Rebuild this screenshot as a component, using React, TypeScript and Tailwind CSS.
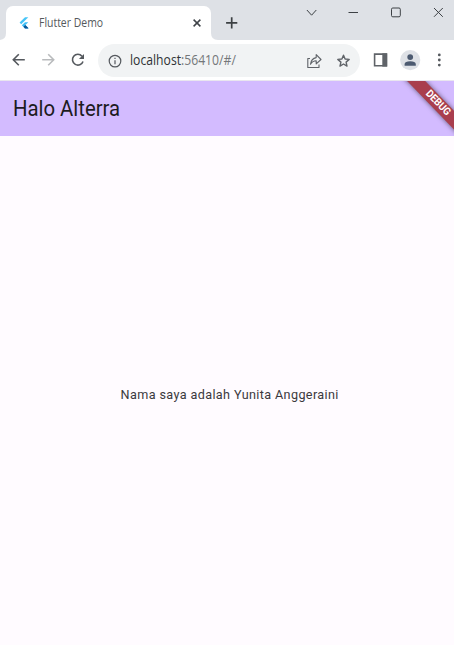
import React from "react";

function TabStrip() {
  return (
    <header className="flex h-[40px] shrink-0 bg-[#dee1e6] pl-[6px]">
      <div className="relative mt-[6px] flex h-[34px] w-[205px] items-center rounded-t-[7px] bg-white">
        <svg className="absolute -left-[7px] bottom-0" width="7" height="7" viewBox="0 0 7 7">
          <path d="M7 0V7H0Q7 7 7 0Z" fill="#fff" />
        </svg>
        <svg className="absolute -right-[7px] bottom-0" width="7" height="7" viewBox="0 0 7 7">
          <path d="M0 0V7H7Q0 7 0 0Z" fill="#fff" />
        </svg>
        <svg className="ml-[13px] shrink-0" width="10" height="12" viewBox="0 0 10 12">
          <path d="M6 .3H9.3L2.2 7.2.6 5.6Z" fill="#46c5f8" />
          <path d="M6 5.2H9.3L6.4 8 9.3 10.9V11.4H6L2.8 8.3Z" fill="#40bff5" />
          <path d="M4.5 9.8L6.3 8.1 9.3 10.9V11.4H6Z" fill="#075597" />
        </svg>
        <span className="ml-[10px] w-[152px] origin-left scale-x-[0.87] whitespace-nowrap font-['Open_Sans','Noto_Sans',sans-serif] text-[12px] leading-4 text-[#55595d]">
          Flutter Demo
        </span>
        <svg className="absolute left-[187px] top-[13px]" width="8" height="8" viewBox="0 0 8 8" fill="none" stroke="#3f4348" strokeWidth="1.5">
          <path d="M.6.6 7.4 7.4M7.4.6.6 7.4" />
        </svg>
      </div>
      <svg className="ml-[15px] mt-[17px]" width="12" height="12" viewBox="0 0 12 12" fill="none" stroke="#3c4043" strokeWidth="1.7">
        <path d="M5.7.3V11.5M.1 5.9H11.3" />
      </svg>
      <svg className="ml-auto mr-[5px] mt-[6px]" width="145" height="14" viewBox="0 0 145 14" fill="none" stroke="#3d4145" strokeWidth="1">
        <path d="M2.9 4 7.6 9.2 12.3 4" />
        <path d="M44.5 6.5H54" />
        <rect x="87.5" y="2" width="8.8" height="8.8" rx="1.3" />
        <path d="M130 2 138.8 10.8M138.8 2 130 10.8" />
      </svg>
    </header>
  );
}

function Toolbar() {
  return (
    <nav className="flex h-[41px] shrink-0 border-b border-[#e9e6ef] bg-white">
      <svg className="mt-[11px] shrink-0" width="98" height="18" viewBox="0 0 98 18" fill="none" strokeWidth="1.6">
        <path d="M24.8 8.7H13.5M18.8 3.2 13.3 8.7 18.8 14.2" stroke="#55595e" />
        <path d="M42.2 8.7H53.5M48.2 3.2 53.7 8.7 48.2 14.2" stroke="#b9bbbd" />
        <path d="M82 5.2A5.4 5.4 0 1 0 83 10.4" stroke="#55595e" />
        <path d="M84 3V8.1H78.9Z" fill="#55595e" />
      </svg>
      <div className="mt-[4px] flex h-[33px] w-[262px] shrink-0 items-center rounded-full bg-[#f1f3f4]">
        <svg className="ml-[10px] shrink-0" width="14" height="14" viewBox="0 0 14 14" fill="none" stroke="#55595e" strokeWidth="1.2">
          <circle cx="7" cy="7.1" r="5.8" />
          <path d="M7 6.3V10.2M7 3.8V5.1" />
        </svg>
        <span className="mb-[2px] ml-[7.5px] w-[177.5px] origin-left scale-x-[0.87] whitespace-nowrap font-['Open_Sans','Noto_Sans',sans-serif] text-[14px] leading-5 text-[#74777a]">
          <span className="text-[#303336]">localhost</span>:56410/#/
        </span>
        <svg className="shrink-0" width="48" height="18" viewBox="0 0 48 18" fill="none" stroke="#5f6368" strokeWidth="1.1" strokeLinejoin="round">
          <path d="M3 6.5H.8V15.5H12V12.5" />
          <path d="M3.5 12.2C4 8.3 6 6.1 9.2 5.6V2.6L14 7.5 9.2 11.8V8.8C6.8 8.8 4.9 10 3.5 12.2Z" />
          <path d="M36.5 3.2 38.1 7 42.2 7.4 39.1 10.1 40 14.1 36.5 12 33 14.1 33.9 10.1 30.8 7.4 34.9 7Z" strokeWidth="1.4" />
        </svg>
      </div>
      <svg className="ml-[13px] mt-[9px] shrink-0" width="75" height="22" viewBox="0 0 75 22">
        <path d="M1.6 5.1H13.4V16.8H1.6Z" fill="none" stroke="#5f6368" strokeWidth="1.6" />
        <path d="M9.3 4.3H14.2V17.6H9.3Z" fill="#5f6368" />
        <circle cx="37.2" cy="11.1" r="10.1" fill="#dee1e6" />
        <circle cx="37.2" cy="8.1" r="2.9" fill="#4c5a70" />
        <path d="M31.6 16.8V15Q32 12.3 37.2 12.3T42.8 15V16.8Z" fill="#4c5a70" />
        <circle cx="66.3" cy="5.9" r="1.4" fill="#55595e" />
        <circle cx="66.3" cy="11" r="1.4" fill="#55595e" />
        <circle cx="66.3" cy="16.1" r="1.4" fill="#55595e" />
      </svg>
    </nav>
  );
}

function DebugBanner() {
  return (
    <div className="absolute left-[393px] top-[16px] flex h-[12.5px] w-[90px] rotate-[46deg] items-center justify-center bg-[#a93e4e] shadow-[0_0_5px_rgba(0,0,0,0.55)]">
      <span className="font-[Roboto,sans-serif] text-[10.5px] font-bold leading-none text-white">
        <span className="inline-block scale-x-[0.92]">DEBUG</span>
      </span>
    </div>
  );
}

export default function App() {
  return (
    <div className="flex h-[646px] w-[454px] flex-col overflow-hidden bg-white">
      <TabStrip />
      <Toolbar />
      <main className="relative flex h-[564px] flex-col overflow-hidden bg-[#fffbff]">
        <div className="flex h-[55px] shrink-0 items-center bg-[#d3bbff] pb-[2px] pl-[13px]">
          <h1 className="origin-left scale-x-[0.903] whitespace-nowrap font-[Roboto,sans-serif] text-[22.5px] leading-7 text-[#1d1b1e]">
            Halo Alterra
          </h1>
        </div>
        <div className="flex flex-1 items-center justify-center pl-[5px] pt-[6px]">
          <p className="scale-x-[0.935] whitespace-nowrap font-[Roboto,sans-serif] text-[13.5px] leading-5 tracking-[0.4px] text-[#3b393d]">
            Nama saya adalah Yunita Anggeraini
          </p>
        </div>
        <DebugBanner />
      </main>
    </div>
  );
}
